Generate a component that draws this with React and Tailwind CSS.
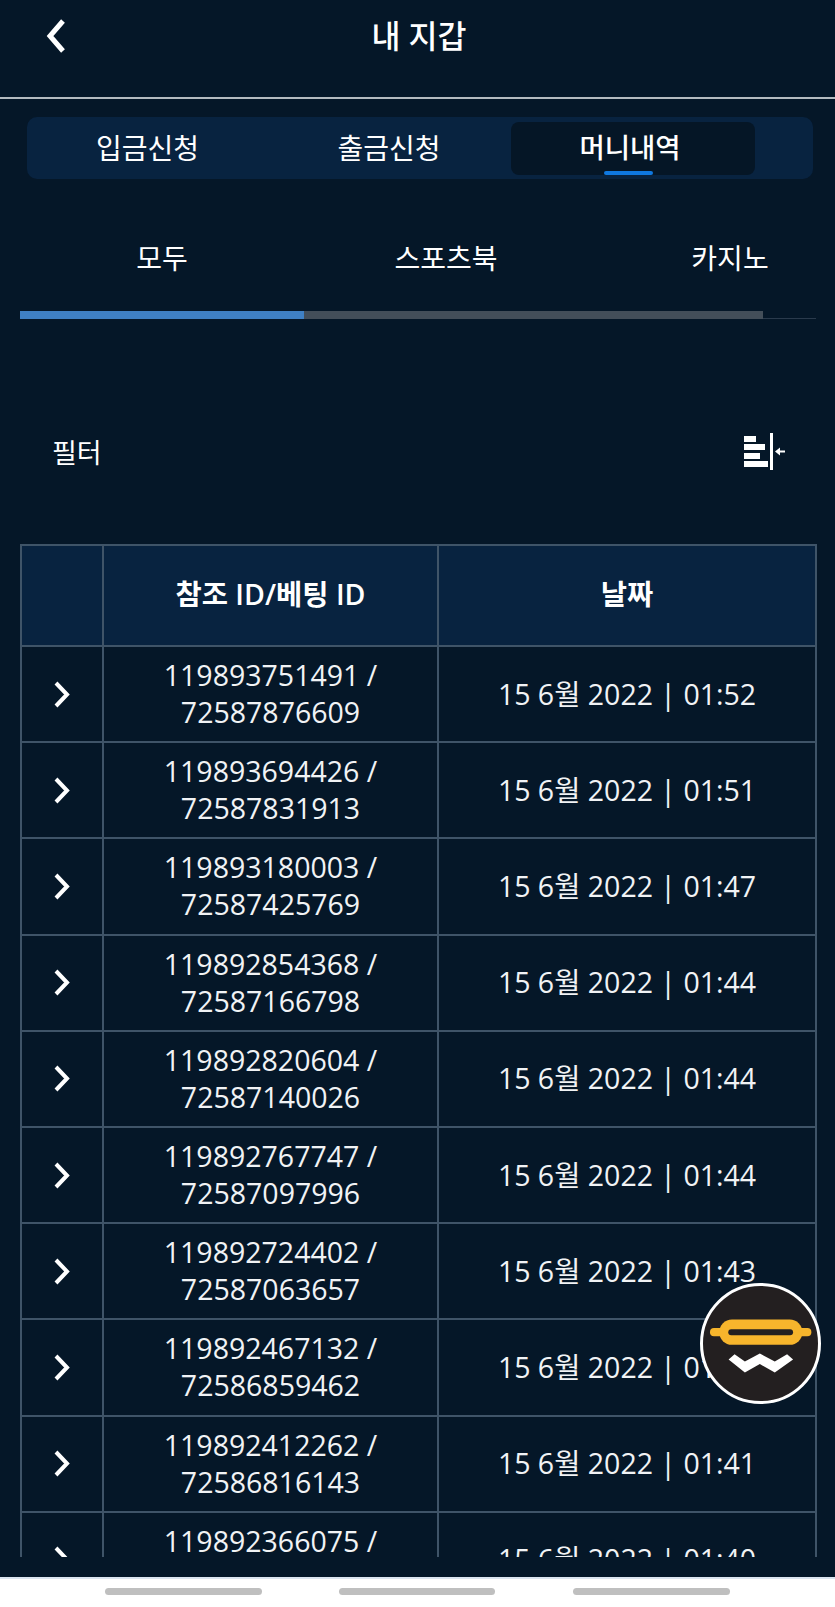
const ROWS = [
  ["119893751491", "72587876609", "01:52"],
  ["119893694426", "72587831913", "01:51"],
  ["119893180003", "72587425769", "01:47"],
  ["119892854368", "72587166798", "01:44"],
  ["119892820604", "72587140026", "01:44"],
  ["119892767747", "72587097996", "01:44"],
  ["119892724402", "72587063657", "01:43"],
  ["119892467132", "72586859462", "01:42"],
  ["119892412262", "72586816143", "01:41"],
  ["119892366075", "72586779021", "01:40"],
];

const FONT = "font-['Open_Sans','Noto_Sans_CJK_KR',sans-serif]";

function FilterIcon() {
  return (
    <svg width="42" height="38" viewBox="0 0 42 38" fill="white">
      <rect x="0" y="3" width="12" height="6" />
      <rect x="0" y="11" width="21" height="6" />
      <rect x="0" y="20" width="16" height="6" />
      <rect x="0" y="28" width="24" height="6" />
      <rect x="26" y="0" width="3" height="37" />
      <path d="M31 18.500l5-4v3h5v2h-5v3z" />
    </svg>
  );
}

function FloatLogo() {
  return (
    <div className="absolute left-[700px] top-[1283px] w-[121px] h-[121px] rounded-full bg-[#231f20] border-[3px] border-white">
      <svg width="115" height="115" viewBox="129 77 346 346">
        <rect x="150" y="203" width="305" height="25" rx="12" fill="#f7b52c" />
        <rect x="178" y="178" width="250" height="76" rx="38" fill="#f7b52c" />
        <rect x="205" y="207" width="195" height="18" rx="9" fill="#231f20" />
        <polygon points="206,298 224,282 255,304 300,280 345,304 382,282 400,298 345,337 300,312 255,337" fill="white" />
      </svg>
    </div>
  );
}

export default function App() {
  return (
    <div className={"relative w-[835px] h-[1607px] overflow-hidden flex flex-col bg-[#051728] text-white " + FONT}>
      <div className="h-[99px] flex-shrink-0 relative flex items-start justify-center border-b-2 border-[#b4bbc0]">
        <svg className="absolute left-[45px] top-[19px]" width="21" height="34" viewBox="0 0 21 34" fill="none" stroke="white" strokeWidth="5">
          <path d="M18 2L5 17l13 15" />
        </svg>
        <h1 className="text-[31.5px] leading-[40px] font-medium mt-[16px] pl-[3px]">내 지갑</h1>
      </div>

      <div className="ml-[27px] w-[786px] mt-[18px] h-[62px] flex-shrink-0 rounded-[10px] bg-[#082340] flex items-center">
        <div className="w-[241px] text-center text-[28px]">입금신청</div>
        <div className="w-[242px] text-center text-[28px]">출금신청</div>
        <div className="relative w-[244px] h-[53px] ml-[1px] pr-[6px] rounded-[8px] bg-[#051626] flex items-center justify-center text-[27.5px] font-medium">
          머니내역
          <div className="absolute bottom-0 left-[93px] w-[49px] h-[4px] rounded-sm bg-[#0f78e0]" />
        </div>
      </div>

      <div className="ml-[20px] w-[796px] mt-[36px] flex-shrink-0 overflow-hidden">
        <div className="flex h-[96px] text-[28px] items-start pt-[22px]">
          <div className="w-[284px] flex-shrink-0 text-center">모두</div>
          <div className="w-[284px] flex-shrink-0 text-center">스포츠북</div>
          <div className="w-[284px] flex-shrink-0 text-center">카지노</div>
        </div>
        <div className="relative h-[8px]">
          <div className="absolute bottom-0 left-0 right-0 h-px bg-[#2a3a4c]" />
          <div className="relative w-[743px] h-[8px] bg-[#434e59]">
            <div className="w-[284px] h-[8px] bg-[#3f80c4]" />
          </div>
        </div>
      </div>

      <div className="flex items-center justify-between mt-[113px] pl-[52px] pr-[49px] h-[40px] flex-shrink-0">
        <span className="text-[27px] pt-[3px]">필터</span>
        <FilterIcon />
      </div>

      <div className="ml-[20px] w-[798px] mt-[72px] h-[1013px] flex-shrink-0 overflow-hidden">
        <table className="w-[797px] table-fixed border-collapse">
          <colgroup>
            <col className="w-[82px]" />
            <col className="w-[335px]" />
            <col />
          </colgroup>
          <thead>
            <tr className="h-[101px] bg-[#082340]">
              <th className="border-2 border-[#3f5468]" />
              <th className="border-2 border-[#3f5468] pb-[3px] text-[28.5px] font-semibold">참조 ID/베팅 ID</th>
              <th className="border-2 border-[#3f5468] pb-[3px] text-[28.5px] font-semibold">날짜</th>
            </tr>
          </thead>
          <tbody>
            {ROWS.map((r) => (
              <tr key={r[0]} className="h-[96.2px]">
                <td className="border-2 border-[#3f5468]">
                  <svg className="block mx-auto" width="18" height="27" viewBox="0 0 18 27" fill="none" stroke="white" strokeWidth="4">
                    <path d="M3 2l11 11.500L3 25" />
                  </svg>
                </td>
                <td className="border-2 border-[#3f5468] text-center text-[28.5px] leading-[37px] text-[#f1f3f5]">
                  {r[0]} /<br />{r[1]}
                </td>
                <td className="border-2 border-[#3f5468] text-center text-[28.5px] text-[#f1f3f5]">15 6월 2022 | {r[2]}</td>
              </tr>
            ))}
          </tbody>
        </table>
      </div>

      <div className="flex-1" />
      <div className="h-[30px] flex-shrink-0 bg-white border-t-2 border-[#dbe5f0] flex items-start pt-[9px]">
        <div className="ml-[105px] w-[157px] h-[7px] rounded-full bg-[#bfbfbf]" />
        <div className="ml-[77px] w-[156px] h-[7px] rounded-full bg-[#bfbfbf]" />
        <div className="ml-[78px] w-[157px] h-[7px] rounded-full bg-[#bfbfbf]" />
      </div>

      <FloatLogo />
    </div>
  );
}
